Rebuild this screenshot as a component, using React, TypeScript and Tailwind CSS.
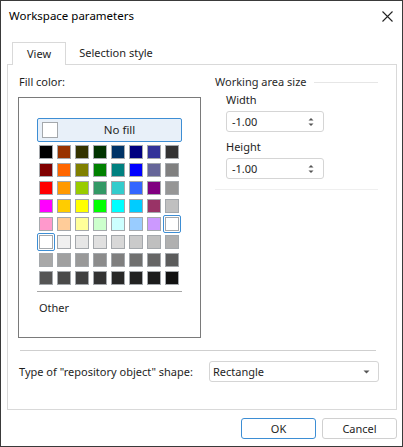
const PALETTE = [
  ["#000000", "#993300", "#333300", "#003300", "#003366", "#000080", "#333399", "#333333"],
  ["#800000", "#ff6600", "#808000", "#008000", "#008080", "#0000ff", "#666699", "#808080"],
  ["#ff0000", "#ff9900", "#99cc00", "#339966", "#33cccc", "#3366ff", "#800080", "#969696"],
  ["#ff00ff", "#ffcc00", "#ffff00", "#00ff00", "#00ffff", "#00ccff", "#993366", "#c0c0c0"],
  ["#ff99cc", "#ffcc99", "#ffff99", "#ccffcc", "#ccffff", "#99ccff", "#cc99ff", "#ffffff"],
  ["#ffffff", "#f0f0f0", "#e6e6e6", "#e0e0e0", "#d8d8d8", "#cacaca", "#bfbfbf", "#b0b0b0"],
  ["#a8a8a8", "#a0a0a0", "#999999", "#8c8c8c", "#7f7f7f", "#707070", "#666666", "#5c5c5c"],
  ["#555555", "#4a4a4a", "#404040", "#333333", "#282828", "#222222", "#1c1c1c", "#111111"],
];

// row, col of the swatches drawn with the blue focus ring
const SELECTED = ["4-7", "5-0"];

function Spinner() {
  return (
    <svg width="6" height="10" viewBox="0 0 6 10" className="text-[#555]">
      <path d="M0.5 3.5 L3 1 L5.5 3.5 Z" fill="currentColor" />
      <path d="M0.5 6.5 L3 9 L5.5 6.5 Z" fill="currentColor" />
    </svg>
  );
}

function NumberBox({ value }: { value: string }) {
  return (
    <div className="flex items-center justify-between w-[98px] h-[21px] border border-[#d5d5d5] rounded-[3px] bg-white pl-[5px] pr-[9px]">
      <span>{value}</span>
      <Spinner />
    </div>
  );
}

export default function App() {
  return (
    <div
      className="w-[403px] h-[447px] bg-white border border-[#3a3a3a] flex flex-col text-[11px] leading-[16px] text-[#1e1e1e]"
      style={{ fontFamily: '"Noto Sans", "Open Sans", sans-serif' }}
    >
      {/* title bar */}
      <div className="h-[30px] flex items-center justify-between pl-[8px] pr-[9px] shrink-0">
        <span className="text-[#000] text-[11.5px]">Workspace parameters</span>
        <svg width="11" height="11" viewBox="0 0 11 11">
          <path d="M0.5 0.5 L10.5 10.5 M10.5 0.5 L0.5 10.5" stroke="#222" strokeWidth="1.1" />
        </svg>
      </div>

      <div className="ml-[6px] mt-[11px] w-[390px]">
        {/* tabs */}
        <div className="flex items-start pl-[5px] h-[22px]">
          <div className="relative z-10 w-[54px] h-[23px] border border-b-0 border-[#d9d9d9] bg-white flex items-center justify-center pb-[1px]">
            View
          </div>
          <div className="w-[100px] h-[22px] flex items-center justify-center">Selection style</div>
        </div>

        {/* panel */}
        <div className="h-[346px] border border-[#d9d9d9] flex flex-col">
          <div className="flex gap-[14px] pl-[10px]">
            <div className="flex flex-col pt-[9px]">
              <span className="ml-[1px]">Fill color:</span>
              <div className="mt-[7px] w-[183px] h-[241px] border border-[#7a7a7a] pl-[18px] pt-[20px] flex flex-col">
                <div className="w-[145px] h-[24px] border border-[#3d8ed4] rounded-[2px] bg-[#e8f0f9] flex items-center pl-[4px]">
                  <div className="w-[16px] h-[16px] border border-[#a4a8ac] bg-white shrink-0" />
                  <span className="flex-1 text-center text-[11.5px]">No fill</span>
                </div>
                <div className="mt-[1px] grid grid-cols-8 w-[144px]">
                  {PALETTE.map((row, r) =>
                    row.map((color, c) => (
                      <div
                        key={`${r}-${c}`}
                        className={
                          SELECTED.includes(`${r}-${c}`)
                            ? "w-[18px] h-[18px] border border-[#3d8ed4] rounded-[2px] flex items-center justify-center"
                            : "w-[18px] h-[18px] flex items-center justify-center"
                        }
                      >
                        <div className="w-[14px] h-[14px] border border-[#a4a8ac]" style={{ backgroundColor: color }} />
                      </div>
                    ))
                  )}
                </div>
                <div className="mt-[4px] w-[145px] h-px bg-[#a6a6a6]" />
                <span className="mt-[8px] ml-[2px]">Other</span>
              </div>
            </div>

            <div className="w-[163px] flex flex-col pt-[9px]">
              <div className="flex items-center">
                <span className="text-[#2a2a2a]">Working area size</span>
                <div className="flex-1 h-px bg-[#e6e6e6] ml-[7px]" />
              </div>
              <div className="pl-[11px] flex flex-col">
                <span className="mt-[2px]">Width</span>
                <div className="mt-[3px]">
                  <NumberBox value="-1.00" />
                </div>
                <span className="mt-[7px]">Height</span>
                <div className="mt-[3px]">
                  <NumberBox value="-1.00" />
                </div>
              </div>
              <div className="mt-[10px] h-px bg-[#efefef]" />
            </div>
          </div>

          <div className="mt-[12px] ml-[12px] w-[356px] h-px bg-[#cfcfcf]" />

          <div className="mt-[10px] flex items-center pl-[11px]">
            <span>Type of "repository object" shape:</span>
            <div className="ml-auto mr-[17px] w-[170px] h-[21px] border border-[#d5d5d5] rounded-[3px] flex items-center justify-between pl-[3px] pr-[8px]">
              <span>Rectangle</span>
              <svg width="7" height="4" viewBox="0 0 7 4">
                <path d="M0.5 0.5 L6.5 0.5 L3.5 3.5 Z" fill="#555" />
              </svg>
            </div>
          </div>
        </div>
      </div>

      {/* buttons */}
      <div className="mt-[8px] flex gap-[6px] pl-[240px]">
        <button className="w-[75px] h-[21px] border border-[#3d8ed4] rounded-[3px] bg-white flex items-center justify-center">
          OK
        </button>
        <button className="w-[75px] h-[21px] border border-[#d0d0d0] rounded-[3px] bg-white flex items-center justify-center">
          Cancel
        </button>
      </div>
    </div>
  );
}
